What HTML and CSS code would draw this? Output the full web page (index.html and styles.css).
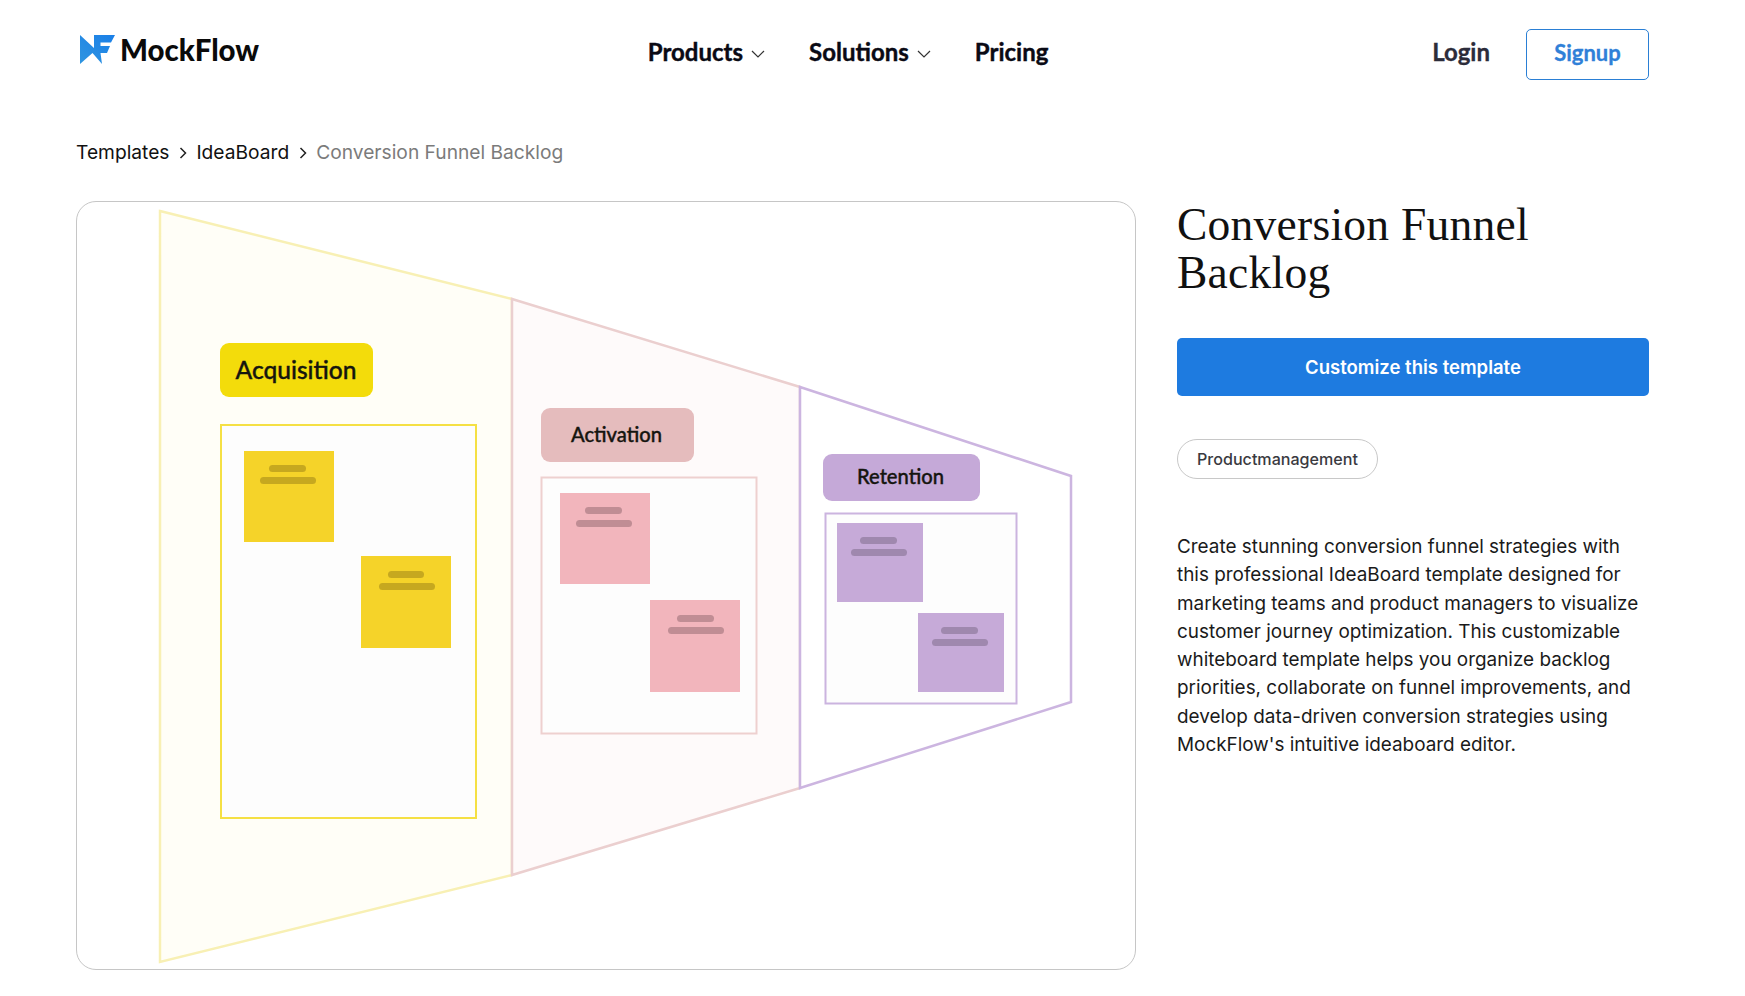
FILE: index.html
```html
<!DOCTYPE html>
<html lang="en">
<head>
<meta charset="utf-8">
<title>Conversion Funnel Backlog - MockFlow</title>
<link rel="stylesheet" href="styles.css">
</head>
<body>
<header class="topbar">
  <a class="logo" href="#">
    <svg class="logo-mark" viewBox="0 0 35 29" aria-hidden="true">
      <defs><linearGradient id="lg" x1="0" y1="1" x2="1" y2="0"><stop offset="0" stop-color="#2f95e0"/><stop offset="1" stop-color="#1a7fe8"/></linearGradient></defs>
      <path fill="url(#lg)" d="M0 0 L14 13 L14 0 L35 0 L31 7.500 L20.500 7.500 L20.500 11 L30 11 L27 18 L20.500 18 L22 29 L12.500 18 L0 29 Z"/>
    </svg>
    <span class="logo-text">MockFlow</span>
  </a>
  <nav class="nav">
    <a class="nav-link" href="#">Products<svg class="chev" viewBox="0 0 14 8"><path d="M1 1 L7 7 L13 1"/></svg></a>
    <a class="nav-link" href="#">Solutions<svg class="chev" viewBox="0 0 14 8"><path d="M1 1 L7 7 L13 1"/></svg></a>
    <a class="nav-link" href="#">Pricing</a>
  </nav>
  <div class="auth">
    <a class="login" href="#">Login</a>
    <a class="signup" href="#">Signup</a>
  </div>
</header>

<nav class="crumbs">
  <a href="#">Templates</a>
  <svg class="crumb-sep" viewBox="0 0 8 12"><path d="M1.500 1 L6.500 6 L1.500 11"/></svg>
  <a href="#">IdeaBoard</a>
  <svg class="crumb-sep" viewBox="0 0 8 12"><path d="M1.500 1 L6.500 6 L1.500 11"/></svg>
  <span class="crumb-current">Conversion Funnel Backlog</span>
</nav>

<main class="detail">
  <div class="preview">
    <svg class="board" viewBox="77 202 1058 767">
      <polygon class="f1" points="160,211 512,299 512,875 160,962"/>
      <polygon class="f2" points="512,299 800,387 800,788 512,875"/>
      <polygon class="f3" points="800,387 1071,476 1071,702 800,788"/>

      <rect class="t1" x="220" y="343" width="153" height="54" rx="9"/>
      <text class="tag-text" x="235.500" y="379" textLength="121" lengthAdjust="spacingAndGlyphs">Acquisition</text>
      <rect class="b1" x="221" y="425" width="255" height="393"/>
      <rect class="s1" x="244" y="451" width="90" height="91"/>
      <rect class="s1" x="361" y="556" width="90" height="92"/>
      <rect class="k1" x="269" y="465" width="37" height="7" rx="3.500"/>
      <rect class="k1" x="260" y="477" width="56" height="7" rx="3.500"/>
      <rect class="k1" x="388" y="571" width="36" height="7" rx="3.500"/>
      <rect class="k1" x="379" y="583" width="56" height="7" rx="3.500"/>

      <rect class="t2" x="541" y="408" width="153" height="54" rx="9"/>
      <text class="tag-text small" x="571" y="442" textLength="91" lengthAdjust="spacingAndGlyphs">Activation</text>
      <rect class="b2" x="541.500" y="477.500" width="215" height="256"/>
      <rect class="s2" x="560" y="493" width="90" height="91"/>
      <rect class="s2" x="650" y="600" width="90" height="92"/>
      <rect class="k2" x="585" y="507" width="37" height="7" rx="3.500"/>
      <rect class="k2" x="576" y="520" width="56" height="7" rx="3.500"/>
      <rect class="k2" x="677" y="615" width="37" height="7" rx="3.500"/>
      <rect class="k2" x="668" y="627" width="56" height="7" rx="3.500"/>

      <rect class="t3" x="823" y="454" width="157" height="47" rx="9"/>
      <text class="tag-text small" x="857" y="484" textLength="87" lengthAdjust="spacingAndGlyphs">Retention</text>
      <rect class="b3" x="825.500" y="513.500" width="191" height="190"/>
      <rect class="s3" x="837" y="523" width="86" height="79"/>
      <rect class="s3" x="918" y="613" width="86" height="79"/>
      <rect class="k3" x="860" y="537" width="37" height="7" rx="3.500"/>
      <rect class="k3" x="851" y="549" width="56" height="7" rx="3.500"/>
      <rect class="k3" x="941" y="627" width="37" height="7" rx="3.500"/>
      <rect class="k3" x="932" y="639" width="56" height="7" rx="3.500"/>
    </svg>
  </div>
  <aside class="info">
    <h1 class="title">Conversion Funnel Backlog</h1>
    <a class="cta" href="#">Customize this template</a>
    <div class="tags"><span class="tag">Productmanagement</span></div>
    <p class="desc">Create stunning conversion funnel strategies with this professional IdeaBoard template designed for marketing teams and product managers to visualize customer journey optimization. This customizable whiteboard template helps you organize backlog priorities, collaborate on funnel improvements, and develop data-driven conversion strategies using MockFlow's intuitive ideaboard editor.</p>
  </aside>
</main>
</body>
</html>
```

FILE: styles.css
```css
* { box-sizing: border-box; }
html, body { margin: 0; padding: 0; background: #fff; }
body {
  width: 1745px;
  height: 996px;
  overflow: hidden;
  padding: 0 96px 0 76px;
  font-family: Inter, "Liberation Sans", sans-serif;
  color: #111;
}
a { color: inherit; text-decoration: none; }

.topbar {
  height: 109px;
  padding-top: 29px;
  display: flex;
  align-items: flex-start;
  justify-content: space-between;
}
.logo { display: flex; align-items: center; gap: 5px; margin: 5px 0 0 4px; height: 31px; width: 184px; }
.logo-mark { width: 35px; height: 29px; flex: none; }
.logo-text { font: 900 29.400px/31px Lato, sans-serif; color: #0a0a0a; }
.nav { display: flex; gap: 44px; height: 51px; align-items: center; }
.nav-link { display: flex; align-items: center; gap: 8px; font: 700 24px/30px Lato, sans-serif; color: #0a0a14; margin-top: -6px; -webkit-text-stroke: 0.4px #0a0a14; }
.chev { width: 14px; height: 8px; margin-top: 5px; fill: none; stroke: #333; stroke-width: 1.2; }
.auth { display: flex; align-items: center; gap: 36px; }
.login { font: 700 24px/30px Lato, sans-serif; color: #2c2c3a; margin-top: -6px; -webkit-text-stroke: 0.3px #2c2c3a; }
.signup {
  width: 123px;
  height: 51px;
  padding-bottom: 3px;
  border: 1px solid #2a7fd5;
  border-radius: 5px;
  display: flex;
  align-items: center;
  justify-content: center;
  font: 700 22px/30px Lato, sans-serif;
  color: #2f80d8;
  -webkit-text-stroke: 0.3px #2f80d8;
}

.crumbs { display: flex; align-items: center; height: 28px; font-size: 19.200px; line-height: 28px; margin-top: 29px; }
.crumb-sep { width: 8px; height: 12px; margin: 1px 9px 0 10px; fill: none; stroke: #222; stroke-width: 1.500; }
.crumb-current { color: #7b7b7b; }

.detail { display: flex; gap: 41px; margin-top: 35px; align-items: flex-start; }
.preview {
  width: 1060px;
  height: 769px;
  flex: none;
  border: 1px solid #c6c6c6;
  border-radius: 20px;
  overflow: hidden;
  background: #fff;
}
.board { display: block; width: 100%; height: 100%; }

.f1 { fill: #fffef7; stroke: #f8f0b4; stroke-width: 2.500; }
.f2 { fill: #fefafa; stroke: #ebcfcf; stroke-width: 2.500; }
.f3 { fill: #fff; stroke: #ccb5e0; stroke-width: 2.500; }
.t1 { fill: #f3dc0b; }
.t2 { fill: #e5bcbd; }
.t3 { fill: #c5a9d8; }
.b1, .b2, .b3 { fill: #fdfdfd; }
.b1 { stroke: #f5e044; stroke-width: 2; }
.b2 { stroke: #eed0cf; stroke-width: 2; }
.b3 { stroke: #cbb4df; stroke-width: 2; }
.s1 { fill: #f5d329; }
.s2 { fill: #f2b5bc; }
.s3 { fill: #c6aad8; }
.k1 { fill: #c6a81f; }
.k2 { fill: #c08d94; }
.k3 { fill: #9f88ae; }
.tag-text { font: 500 25px Lato, sans-serif; fill: #15150f; stroke: #15150f; stroke-width: 0.4px; }
.tag-text.small { font-size: 21px; }

.info { width: 472px; flex: none; }
.title {
  margin: 0;
  font: 400 45.500px/48px "Liberation Serif", serif;
  letter-spacing: 0.25px;
  color: #111;
}
.cta {
  display: flex;
  align-items: center;
  justify-content: center;
  height: 58px;
  margin-top: 41px;
  background: #1e7be0;
  border-radius: 5px;
  color: #fff;
  font-size: 18.500px;
  font-weight: 600;
  padding-bottom: 1px;
}
.tags { margin-top: 43px; display: flex; }
.tag {
  height: 40px;
  padding: 0 19px;
  display: flex;
  align-items: center;
  border: 1px solid #c8c8c8;
  border-radius: 20px;
  font-size: 16.100px;
  font-weight: 500;
  color: #3a3a3f;
}
.desc { margin: 54px 0 0; font-size: 18.900px; line-height: 28.300px; color: #1a1a1a; }
```
